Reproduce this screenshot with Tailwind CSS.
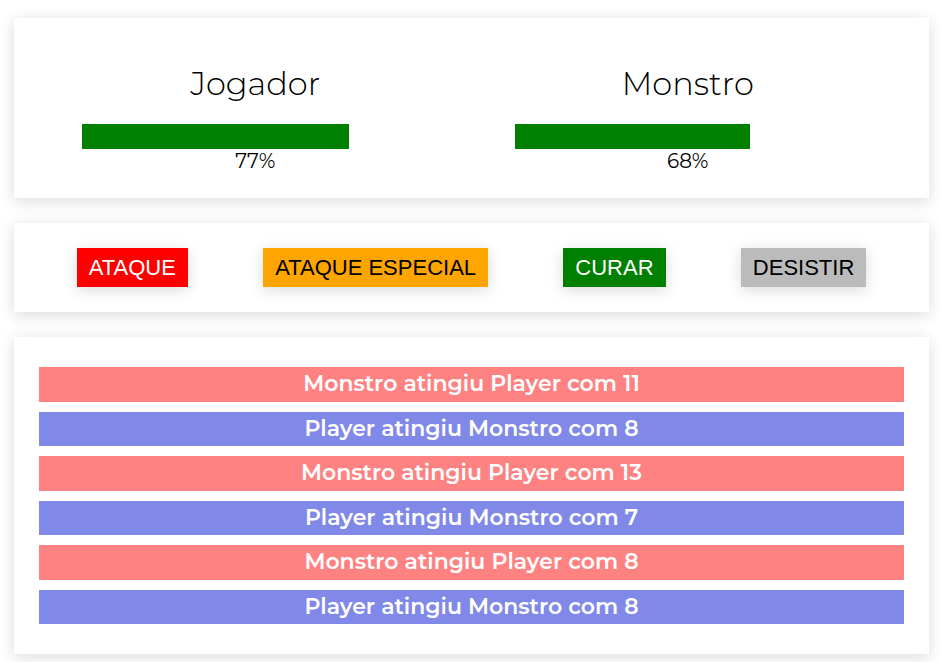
<!DOCTYPE html>
<html lang="pt-BR">
<head>
<meta charset="utf-8">
<meta name="viewport" content="width=device-width, initial-scale=1">
<title>Matador de Monstros</title>
<script src="https://cdn.jsdelivr.net/npm/@tailwindcss/browser@4"></script>
</head>
<body class="bg-white font-[Montserrat,Inter,sans-serif] text-black">
<main class="flex flex-col gap-[25px] pt-[18px] pr-3 pb-2 pl-[14px]">
  <section class="grid grid-cols-2 p-[25px] pt-10 shadow-[0_3px_15px_rgba(0,0,0,0.15)]">
    <div class="flex flex-col items-center">
      <h1 class="text-[32px] leading-[52px] font-light">Jogador</h1>
      <div class="mt-[14px] w-4/5"><div class="h-[25px] bg-[#008000]" style="width:77%"></div></div>
      <div class="text-[20px] leading-6 font-normal">77%</div>
    </div>
    <div class="flex flex-col items-center">
      <h1 class="text-[32px] leading-[52px] font-light">Monstro</h1>
      <div class="mt-[14px] w-4/5"><div class="h-[25px] bg-[#008000]" style="width:68%"></div></div>
      <div class="text-[20px] leading-6 font-normal">68%</div>
    </div>
  </section>
  <section class="flex flex-wrap justify-around p-[25px] font-['Liberation_Sans',Arial,sans-serif] text-[22px] leading-[25px] shadow-[0_3px_15px_rgba(0,0,0,0.15)]">
    <button class="bg-[#ff0000] px-3 py-[7px] text-white shadow-[0_3px_15px_rgba(0,0,0,0.15)]">ATAQUE</button>
    <button class="bg-[#ffa500] px-3 py-[7px] shadow-[0_3px_15px_rgba(0,0,0,0.15)]">ATAQUE ESPECIAL</button>
    <button class="bg-[#008000] px-3 py-[7px] text-white shadow-[0_3px_15px_rgba(0,0,0,0.15)]">CURAR</button>
    <button class="bg-[#bbbbbb] px-3 py-[7px] shadow-[0_3px_15px_rgba(0,0,0,0.15)]">DESISTIR</button>
  </section>
  <section class="px-[25px] py-[30px] shadow-[0_3px_15px_rgba(0,0,0,0.15)]">
    <ul class="grid min-h-[257px] auto-rows-fr gap-[10px] text-center text-[22px] leading-[34px] font-semibold text-white">
      <li class="bg-[#ff8282]">Monstro atingiu Player com 11</li>
      <li class="bg-[#8089e8]">Player atingiu Monstro com 8</li>
      <li class="bg-[#ff8282]">Monstro atingiu Player com 13</li>
      <li class="bg-[#8089e8]">Player atingiu Monstro com 7</li>
      <li class="bg-[#ff8282]">Monstro atingiu Player com 8</li>
      <li class="bg-[#8089e8]">Player atingiu Monstro com 8</li>
    </ul>
  </section>
</main>
</body>
</html>
